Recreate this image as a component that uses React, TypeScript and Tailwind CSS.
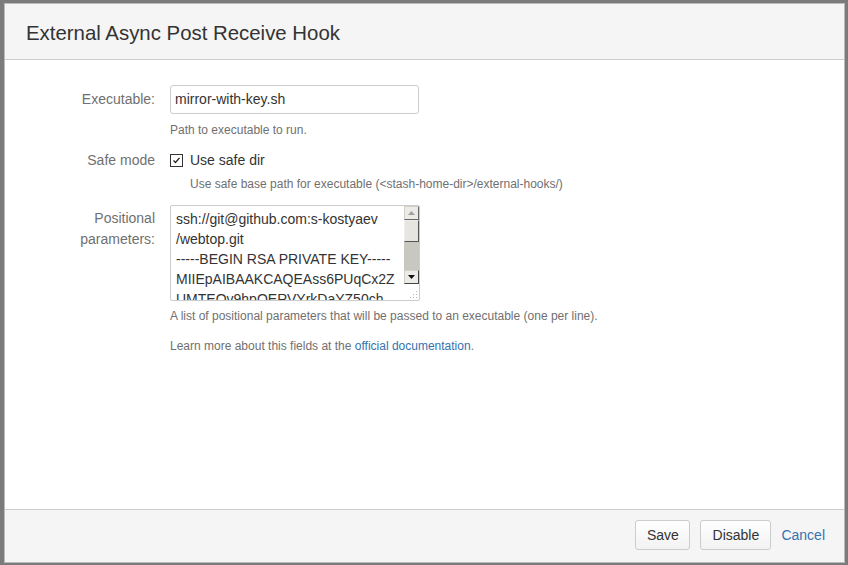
import React from "react";

const font = { fontFamily: '"Liberation Sans", Arial, sans-serif' };

function Checkbox() {
  return (
    <svg width="13" height="13" viewBox="0 0 13 13" className="flex-none">
      <rect x="0.5" y="0.5" width="12" height="12" fill="#fff" stroke="#333" />
      <path d="M3.5 6.5 L5.5 8.5 L9.5 3.8" fill="none" stroke="#222" strokeWidth="1.3" />
    </svg>
  );
}

function FakeScrollbar() {
  return (
    <div className="flex w-[15px] flex-none flex-col">
      <div className="flex h-[14px] items-center justify-center border border-[#d4d0c8] border-b-[#666] border-r-[#666] bg-[#ecebe6]">
        <svg width="7" height="4" viewBox="0 0 7 4">
          <path d="M0 4 L3.5 0 L7 4 Z" fill="#a0a0a0" />
        </svg>
      </div>
      <div className="h-[22px] border border-[#eee] border-b-[#555] border-r-[#555] bg-[#e6e5e0]" />
      <div className="h-[28px] bg-[#c8c7c0]" />
      <div className="flex h-[14px] items-center justify-center border border-[#d4d0c8] border-b-[#444] border-r-[#444] bg-[#ecebe6]">
        <svg width="7" height="4" viewBox="0 0 7 4">
          <path d="M0 0 L3.5 4 L7 0 Z" fill="#111" />
        </svg>
      </div>
      <div className="flex flex-1 items-end justify-end p-[1px]">
        <svg width="9" height="9" viewBox="0 0 9 9">
          <g fill="#bbb">
            <rect x="7" y="1" width="1" height="1" />
            <rect x="4" y="4" width="1" height="1" />
            <rect x="7" y="4" width="1" height="1" />
            <rect x="1" y="7" width="1" height="1" />
            <rect x="4" y="7" width="1" height="1" />
            <rect x="7" y="7" width="1" height="1" />
          </g>
        </svg>
      </div>
    </div>
  );
}

export default function App() {
  const lines = [
    "ssh://git@github.com:s-kostyaev",
    "/webtop.git",
    "-----BEGIN RSA PRIVATE KEY-----",
    "MIIEpAIBAAKCAQEAss6PUqCx2Z",
    "UMTEQv9hpQERVYrkDaYZ50ch",
  ];

  return (
    <div className="h-[565px] w-[848px] overflow-hidden bg-[#7b7b7b] pt-[3px] pl-[4px]" style={font}>
      <div className="flex h-[560px] w-[841px] flex-col border border-[#bbb] bg-white">
        <div className="flex h-[56px] flex-none items-center border-b border-[#ccc] bg-[#f5f5f5] pt-[4px] pl-[21px]">
          <h2 className="text-[20.4px] text-[#333]">External Async Post Receive Hook</h2>
        </div>

        <div className="flex-1 pt-[25px] text-[14px]">
          {/* executable */}
          <div className="flex">
            <label className="w-[150px] text-right leading-[29px] text-[#707070]">Executable:</label>
            <div className="ml-[15px]">
              <div className="flex h-[29px] w-[249px] items-center rounded-[3px] border border-[#ccc] px-[4px] text-[#333]">
                mirror-with-key.sh
              </div>
            </div>
          </div>
          <div className="mt-[8px] ml-[165px] text-[12px] leading-[16px] text-[#707070]">Path to executable to run.</div>

          {/* safe mode */}
          <div className="mt-[12px] flex">
            <label className="w-[150px] text-right leading-[20px] text-[#707070]">Safe mode</label>
            <div className="ml-[15px] flex items-center gap-[7px] text-[#333]">
              <Checkbox />
              <span className="leading-[20px]">Use safe dir</span>
            </div>
          </div>
          <div className="mt-[6px] ml-[185px] text-[12px] leading-[16px] text-[#707070]">
            Use safe base path for executable (&lt;stash-home-dir&gt;/external-hooks/)
          </div>

          {/* positional parameters */}
          <div className="mt-[13px] flex">
            <label className="w-[150px] pt-[3px] text-right leading-[21px] text-[#707070]">
              Positional
              <br />
              parameters:
            </label>
            <div className="ml-[15px] flex h-[96px] w-[250px] overflow-hidden rounded-[2px] border border-[#ccc]">
              <div className="flex-1 overflow-hidden whitespace-nowrap pt-[3px] pl-[5px] leading-[20px] text-[#333]">
                {lines.map((l) => (
                  <div key={l}>{l}</div>
                ))}
              </div>
              <FakeScrollbar />
            </div>
          </div>
          <div className="mt-[7px] ml-[165px] text-[12px] leading-[16px] text-[#707070]">
            A list of positional parameters that will be passed to an executable (one per line).
          </div>
          <div className="mt-[14px] ml-[165px] text-[12px] leading-[16px] text-[#707070]">
            Learn more about this fields at the <a className="text-[#3572b0]">official documentation</a>.
          </div>
        </div>

        <div className="flex h-[53px] flex-none items-start justify-end gap-[10px] border-t border-[#ccc] bg-[#f5f5f5] pt-[10px] pr-[19px] text-[14px]">
          <button className="h-[30px] w-[55px] rounded-[3px] border border-[#ccc] bg-gradient-to-b from-white to-[#f2f2f2] text-[#333]">
            Save
          </button>
          <button className="h-[30px] w-[71px] rounded-[3px] border border-[#ccc] bg-gradient-to-b from-white to-[#f2f2f2] text-[#333]">
            Disable
          </button>
          <a className="leading-[30px] text-[#3572b0]">Cancel</a>
        </div>
      </div>
    </div>
  );
}
